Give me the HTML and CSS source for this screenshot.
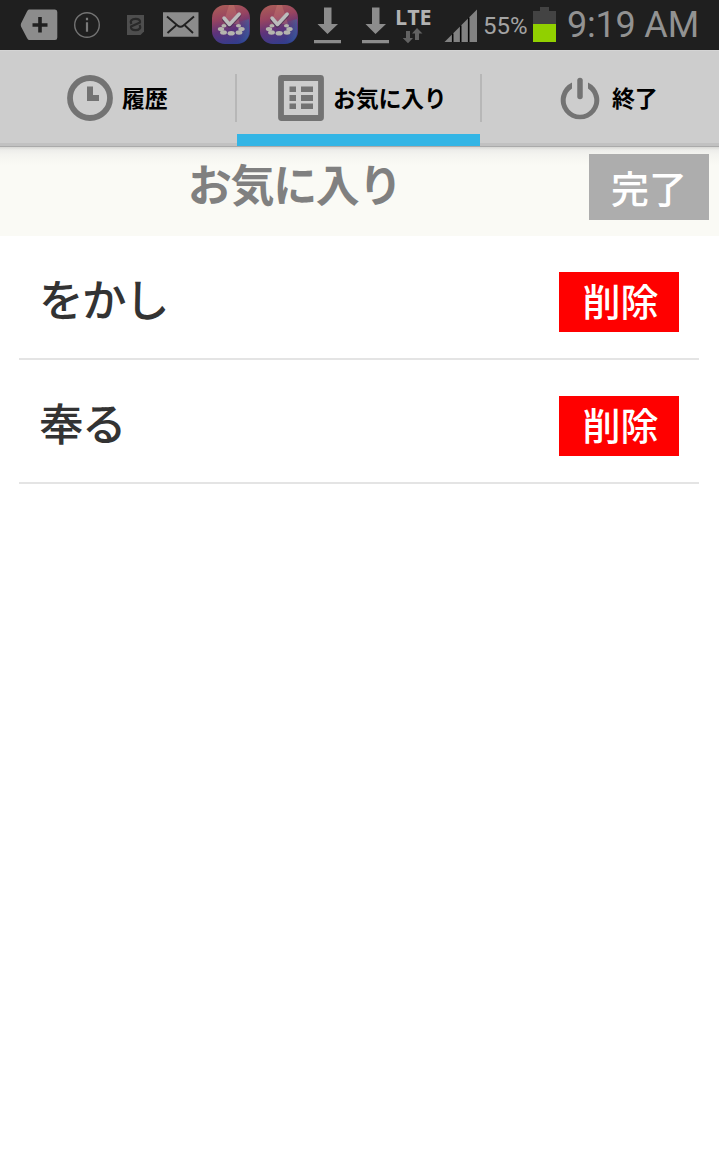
FILE: index.html
```html
<!DOCTYPE html>
<html lang="ja">
<head>
<meta charset="utf-8">
<title>お気に入り</title>
<link rel="stylesheet" href="styles.css">
</head>
<body>
<svg class="defs" width="0" height="0" aria-hidden="true">
  <defs>
    <linearGradient id="appBase" x1="0.35" y1="0" x2="0.6" y2="1">
      <stop offset="0" stop-color="#a85a58"/><stop offset="0.3" stop-color="#984460"/><stop offset="0.62" stop-color="#5e337a"/><stop offset="1" stop-color="#323d8c"/>
    </linearGradient>
    <linearGradient id="appSide" x1="0" x2="1"><stop offset="0.4" stop-color="#2c62a5" stop-opacity="0"/><stop offset="1" stop-color="#3675aa" stop-opacity="0.5"/></linearGradient>
    <symbol id="app" viewBox="0 0 48 50">
      <rect x="6" y="5" width="38" height="39" rx="13" fill="url(#appBase)"/>
      <path d="M25 24L43 19V32Q42 43 31 43H23Z" fill="url(#appSide)"/>
      <path d="M23 5h5l6 19H17z" fill="#e39a83" opacity=".25"/>
      <g fill="#b5b5ae">
        <ellipse cx="15" cy="29" rx="3.200" ry="2"/><ellipse cx="18" cy="25.800" rx="2.600" ry="1.700"/><ellipse cx="32.500" cy="25.800" rx="2.600" ry="1.700"/><ellipse cx="35.500" cy="29" rx="3.200" ry="2"/><ellipse cx="17.500" cy="32.500" rx="3.400" ry="2.200"/><ellipse cx="33" cy="32.500" rx="3.400" ry="2.200"/><ellipse cx="25.200" cy="33.300" rx="3.600" ry="2.300"/>
      </g>
      <path d="M18.200 19.500L23.500 25.500 33.200 15" fill="none" stroke="#332947" stroke-width="4.200" stroke-linecap="round" stroke-linejoin="round" opacity=".6"/>
      <path d="M18 18L23.500 24.500 33.200 14" fill="none" stroke="#bcbcbc" stroke-width="3.500" stroke-linecap="round" stroke-linejoin="round"/>
    </symbol>
  </defs>
</svg>
<header class="status">
  <svg width="66" height="50" viewBox="0 0 66 50"><path d="M29 9.500H55Q57.300 9.500 57.300 12V37.500Q57.300 40 55 40H29Q28 40 27 38L21 26.500Q20.500 25 21 23.500L27 11.500Q28 9.500 29 9.500Z" fill="#8c8c8c"/><path d="M40 17V32.500M32.500 25H47.500" stroke="#202020" stroke-width="3.600"/></svg>
  <svg width="44" height="50" viewBox="66 0 44 50"><circle cx="87" cy="25" r="12.300" fill="none" stroke="#737373" stroke-width="1.400"/><path d="M87 22.300V31.800M87 17.800V20.200" stroke="#7a7a7a" stroke-width="2.200"/></svg>
  <svg width="40" height="50" viewBox="110 0 40 50"><path d="M127 15H144V31.500L140.500 35H127Z" fill="#4e4e4e"/><path d="M131.500 24C129.500 21 132 18.800 135.500 18.800 139 18.800 140.500 20.500 140 22.500L135.500 24.500M139.500 25C141.500 28 139 30.200 135.500 30.200 132 30.200 130.500 28.500 131 26.500L135.500 24.500" fill="none" stroke="#292929" stroke-width="2.200"/></svg>
  <svg width="56" height="50" viewBox="150 0 56 50"><path d="M163 12.300h35.500v24.500H163z" fill="#8c8c8c"/><path d="M167 16.500L177.500 25.500Q180.500 28 183.500 25.500L194 16.500M167.500 33L176 25.500M193 33L185 25.500" fill="none" stroke="#202020" stroke-width="1.900"/></svg>
  <svg width="48" height="50"><use href="#app"/></svg>
  <svg width="48" height="50"><use href="#app"/></svg>
  <svg width="48" height="50" viewBox="302 0 48 50"><path d="M324 7.500h7.500V24H338L327.500 34 317.500 24H324zM314 40h27v3.200h-27z" fill="#8c8c8c"/></svg>
  <svg width="43" height="50" viewBox="350 0 43 50"><path d="M372 7.500h7.500V24H386L375.500 34 365.500 24H372zM362 40h27v3.200h-27z" fill="#8c8c8c"/></svg>
  <div class="network">
    <span class="lte">LTE</span>
    <svg width="42" height="18" viewBox="393 26 42 18"><path d="M406 31h4v7h3l-5 5.200-5.300-5.200h3.300zM415 40h4v-6.500h3.500L417 28l-5 5.500h3z" fill="#626262"/></svg>
  </div>
  <svg width="48" height="50" viewBox="435 0 48 50"><path d="M444.500 42L477 9.500V42z" fill="#828282"/><path d="M452.700 33.500V42M460.700 25.500V42M468.700 17.500V42" stroke="#080808" stroke-width="1.600"/></svg>
  <span class="percent">55%</span>
  <svg width="34" height="50" viewBox="530 0 34 50"><path d="M533 11h7V7h9v4h7v13h-23z" fill="#434343"/><path d="M533 24h23v18h-23z" fill="#91d000"/></svg>
  <span class="time">9:19 AM</span>
</header>
<nav class="tabs">
  <a class="tab tab-history"><svg width="48" height="48" viewBox="0 0 48 48"><circle cx="24" cy="24" r="20" fill="none" stroke="#737373" stroke-width="5.800"/><path d="M21 12.500h6V21h6v6H21z" fill="#737373"/></svg><span>履歴</span></a>
  <a class="tab tab-favorites active"><svg width="48" height="48" viewBox="0 0 48 48"><rect x="4" y="4" width="40" height="40" rx=".5" fill="none" stroke="#737373" stroke-width="5.800"/><path d="M12.500 12.500H19V18h-6.500zM24 12.500h12V18H24zM12.500 21H19v6h-6.500zM24 21h12v6H24zM12.500 29.500H19V35h-6.500zM24 29.500h12V35H24z" fill="#737373"/></svg><span>お気に入り</span></a>
  <a class="tab tab-exit"><svg width="48" height="48" viewBox="0 0 48 48"><path d="M24 6.500V22.500" stroke="#737373" stroke-width="5.500" stroke-linecap="round"/><path d="M16 8.500V14.500A14.300 14.300 0 1 0 32 14.500V8.500A19.300 19.300 0 1 1 16 8.500Z" fill="#737373"/></svg><span>終了</span></a>
</nav>
<section class="heading">
  <h1 class="title">お気に入り</h1>
  <button class="done">完了</button>
</section>
<ul class="list">
  <li class="row"><span class="word">をかし</span><button class="delete">削除</button></li>
  <li class="row"><span class="word">奉る</span><button class="delete">削除</button></li>
</ul>
</body>
</html>
```
FILE: styles.css
```css
* { box-sizing: border-box; }
body { margin: 0; width: 719px; min-height: 1166px; background: #fff; font-family: "Noto Sans CJK JP", sans-serif; overflow-x: hidden; }
.defs { position: absolute; }
button { border: 0; border-radius: 0; padding: 0; font-family: inherit; color: #fff; }
.status { display: flex; height: 50px; background: #1f1f1f; font-family: Roboto, sans-serif; overflow: hidden; }
.status svg { flex: none; display: block; }
.network { width: 42px; flex: none; display: flex; flex-direction: column; padding-top: 7px; }
.lte { height: 19px; padding-left: 2px; font: 700 21.5px/20px "Open Sans", sans-serif; color: #b2b2b2; }
.percent { width: 47px; flex: none; font-size: 24px; line-height: 52px; color: #a4a4a4; font-weight: 400; white-space: nowrap; }
.time { font-size: 36px; line-height: 50px; color: #929292; font-weight: 400; white-space: nowrap; padding-left: 3px; letter-spacing: -.2px; }
.tabs { display: flex; height: 97px; background: linear-gradient(#d4d4d4 0 1px, #cdcdcd 1px 93px, #c1c1c1 93px 96px, #aaa 96px); color: #000; }
.tab { display: flex; align-items: center; height: 96px; font-size: 23px; line-height: 34px; font-weight: 700; }
.tab svg { flex: none; }
.tab span { white-space: nowrap; margin-top: -2px; letter-spacing: -.3px; }
.tab-history { width: 237px; padding-left: 66px; gap: 8px; background: linear-gradient(#b7b7b7, #b7b7b7) 235px 24px / 2px 48px no-repeat; }
.tab-favorites { width: 243px; padding-left: 40px; gap: 8px; }
.tab-exit { width: 239px; padding-left: 76px; gap: 8px; background: linear-gradient(#b7b7b7, #b7b7b7) 0 24px / 2px 48px no-repeat; }
.active { border-bottom: 12px solid #33b5e5; padding-top: 12px; }
.heading { display: flex; height: 89px; padding: 7px 10px 0 0; background: linear-gradient(#d8d8d5, #ededea 3px, #f4f4f0 8px, #fafaf5 18px); }
.title { flex: 1; margin: 0; text-align: center; font-size: 44px; line-height: 59px; font-weight: 700; color: #808080; letter-spacing: -1.3px; }
.done { width: 120px; height: 66px; background: #adadad; font-size: 38px; line-height: 66px; font-weight: 500; }
.list { margin: 0; padding: 0 20px 0 19px; list-style: none; }
.row { display: flex; justify-content: space-between; height: 124px; padding: 36px 20px 0; border-bottom: 2px solid #e4e4e4; }
.word { font-size: 44.5px; line-height: 51px; color: #333; font-weight: 500; letter-spacing: -1.5px; }
.delete { width: 120px; height: 60px; background: #f00; font-size: 38px; line-height: 55px; font-weight: 500; padding: 0 0 5px 3px; }
```
